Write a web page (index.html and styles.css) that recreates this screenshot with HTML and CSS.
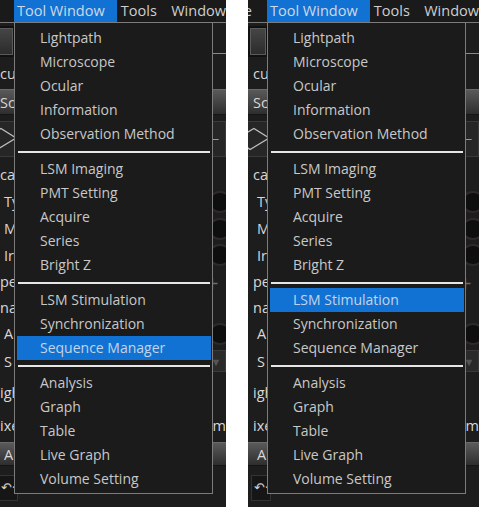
FILE: index.html
```html
<!DOCTYPE html>
<html>
<head>
<meta charset="utf-8">
<link rel="stylesheet" href="styles.css">
</head>
<body>
<div class="page">
  <div class="shot shot-a">
    <div class="scene">
      <div class="menubar">
        <div class="mb-item mb-lead"><span>Device</span></div>
        <div class="mb-item mb-tool active">Tool Window</div>
        <div class="mb-item mb-tools">Tools</div>
        <div class="mb-item mb-win">Window</div>
      </div>
      <div class="bg">
        <div class="row r1"><span class="btnbox"></span><span class="rline"></span></div>
        <div class="row r2"><span class="frag">cul</span></div>
        <div class="row r3 bar"><span class="frag">Sc</span></div>
        <div class="row r4"><span class="iconbox"><svg width="40" height="30" viewBox="0 0 40 30"><path d="M2 16 L22 4 L38 14 L18 26 Z" fill="none" stroke="#bdbdbd" stroke-width="1.4"/></svg></span><span class="minusbox">—</span></div>
        <div class="row r5"><span class="frag">car</span></div>
        <div class="row r6"><span class="frag f-in">Ty</span><span class="knob"></span></div>
        <div class="row r7"><span class="frag f-in">M</span><span class="knob"></span></div>
        <div class="row r8"><span class="frag f-in">Ir</span><span class="knob"></span></div>
        <div class="row r9"><span class="frag">pee</span><span class="plus">+</span></div>
        <div class="row r10"><span class="frag">nag</span></div>
        <div class="row r11"><span class="frag f-in">A</span><span class="knob"></span></div>
        <div class="row r12"><span class="frag f-in">S</span><span class="ddbox">▼</span></div>
        <div class="row r13"><span class="frag">igh</span></div>
        <div class="row r14"><span class="frag">ixe</span><span class="frag">am</span></div>
        <div class="row r15 bar"><span class="frag f-in">A</span></div>
        <div class="row r16"><span class="undo">↶·</span></div>
      </div>
      <div class="dropdown">
        <div class="dd-item">Lightpath</div>
        <div class="dd-item">Microscope</div>
        <div class="dd-item">Ocular</div>
        <div class="dd-item">Information</div>
        <div class="dd-item">Observation Method</div>
        <div class="dd-sep"></div>
        <div class="dd-item">LSM Imaging</div>
        <div class="dd-item">PMT Setting</div>
        <div class="dd-item">Acquire</div>
        <div class="dd-item">Series</div>
        <div class="dd-item">Bright Z</div>
        <div class="dd-sep"></div>
        <div class="dd-item">LSM Stimulation</div>
        <div class="dd-item">Synchronization</div>
        <div class="dd-item selected">Sequence Manager</div>
        <div class="dd-sep"></div>
        <div class="dd-item">Analysis</div>
        <div class="dd-item">Graph</div>
        <div class="dd-item">Table</div>
        <div class="dd-item">Live Graph</div>
        <div class="dd-item">Volume Setting</div>
      </div>
    </div>
  </div>
  <div class="shot shot-b">
    <div class="scene">
      <div class="menubar">
        <div class="mb-item mb-lead"><span>Device</span></div>
        <div class="mb-item mb-tool active">Tool Window</div>
        <div class="mb-item mb-tools">Tools</div>
        <div class="mb-item mb-win">Window</div>
      </div>
      <div class="bg">
        <div class="row r1"><span class="btnbox"></span><span class="rline"></span></div>
        <div class="row r2"><span class="frag">cul</span></div>
        <div class="row r3 bar"><span class="frag">Sc</span></div>
        <div class="row r4"><span class="iconbox"><svg width="40" height="30" viewBox="0 0 40 30"><path d="M2 16 L22 4 L38 14 L18 26 Z" fill="none" stroke="#bdbdbd" stroke-width="1.4"/></svg></span><span class="minusbox">—</span></div>
        <div class="row r5"><span class="frag">car</span></div>
        <div class="row r6"><span class="frag f-in">Ty</span><span class="knob"></span></div>
        <div class="row r7"><span class="frag f-in">M</span><span class="knob"></span></div>
        <div class="row r8"><span class="frag f-in">Ir</span><span class="knob"></span></div>
        <div class="row r9"><span class="frag">pee</span><span class="plus">+</span></div>
        <div class="row r10"><span class="frag">nag</span></div>
        <div class="row r11"><span class="frag f-in">A</span><span class="knob"></span></div>
        <div class="row r12"><span class="frag f-in">S</span><span class="ddbox">▼</span></div>
        <div class="row r13"><span class="frag">igh</span></div>
        <div class="row r14"><span class="frag">ixe</span><span class="frag">am</span></div>
        <div class="row r15 bar"><span class="frag f-in">A</span></div>
        <div class="row r16"><span class="undo">↶·</span></div>
      </div>
      <div class="dropdown">
        <div class="dd-item">Lightpath</div>
        <div class="dd-item">Microscope</div>
        <div class="dd-item">Ocular</div>
        <div class="dd-item">Information</div>
        <div class="dd-item">Observation Method</div>
        <div class="dd-sep"></div>
        <div class="dd-item">LSM Imaging</div>
        <div class="dd-item">PMT Setting</div>
        <div class="dd-item">Acquire</div>
        <div class="dd-item">Series</div>
        <div class="dd-item">Bright Z</div>
        <div class="dd-sep"></div>
        <div class="dd-item selected">LSM Stimulation</div>
        <div class="dd-item">Synchronization</div>
        <div class="dd-item">Sequence Manager</div>
        <div class="dd-sep"></div>
        <div class="dd-item">Analysis</div>
        <div class="dd-item">Graph</div>
        <div class="dd-item">Table</div>
        <div class="dd-item">Live Graph</div>
        <div class="dd-item">Volume Setting</div>
      </div>
    </div>
  </div>
</div>
</body>
</html>
```

FILE: styles.css
```css
* { box-sizing: border-box; }
html, body { margin: 0; padding: 0; background: #ffffff; }
body { font-family: "Open Sans", "Noto Sans", sans-serif; font-size: 14px; }

.page { display: flex; gap: 22px; width: 479px; height: 507px; }

.shot { height: 507px; overflow: hidden; background: #1d1d1d; }
.shot-a { width: 226px; }
.shot-b { width: 231px; }
.shot-a .scene { margin-left: -5px; }

.scene { position: relative; width: 231px; height: 507px; }

/* menu bar */
.menubar { display: flex; height: 23px; background: #1a1a1a; border-bottom: 1px solid #7a7a7a; color: #cfcfcf; font-size: 14.5px; line-height: 22px; white-space: nowrap; }
.mb-item { height: 22px; }
.mb-lead { width: 19px; display: flex; justify-content: flex-end; padding-right: 15px; }
.mb-tool { width: 104px; padding-left: 3px; }
.mb-tools { width: 55px; padding-left: 4px; }
.mb-win { padding-left: 0; }
.active { background: #1272d3; color: #cfd9e6; }

/* background app controls */
.bg { display: flex; flex-direction: column; color: #d8d8d8; }
.row { display: flex; justify-content: space-between; align-items: center; white-space: nowrap; }
.r1 { height: 36px; align-items: flex-start; padding-top: 5px; }
.r2 { height: 28px; }
.r3 { height: 30px; }
.r4 { height: 43px; }
.r5 { height: 28px; }
.r6, .r7 { height: 27px; }
.r8 { height: 26px; }
.r9 { height: 27px; }
.r10 { height: 25px; }
.r11 { height: 27px; }
.r12 { height: 28px; }
.r13 { height: 35px; }
.r14 { height: 30px; }
.r15 { height: 28px; }
.r16 { height: 39px; align-items: flex-start; padding-top: 7px; }

.frag { padding-left: 5px; font-size: 14.5px; }
.f-in { padding-left: 9px; }
.bar { margin: 2px 0; background: linear-gradient(#5a5a5a, #2e2e2e); border-top: 1px solid #6a6a6a; border-bottom: 1px solid #151515; }
.r3.bar { height: 26px; }
.r15.bar { height: 24px; }

.btnbox { margin-left: 2px; width: 16px; height: 27px; background: linear-gradient(#454545, #2c2c2c); border: 1px solid #5b5b5b; box-shadow: 0 0 0 2px #111; }
.rline { width: 16px; height: 26px; border-bottom: 1px solid #8a8a8a; border-left: 1px solid #555; }

.iconbox { margin-left: -16px; width: 40px; height: 36px; background: #262626; border: 1px solid #3a3a3a; display: flex; align-items: center; justify-content: center; }
.minusbox { width: 26px; height: 36px; background: #262626; border: 1px solid #3a3a3a; color: #9a9a9a; display: flex; align-items: center; justify-content: center; font-size: 12px; }

.knob { width: 24px; height: 22px; margin-right: -6px; border-radius: 50%; background: #0e0e0e; border: 2px solid #2f2a2a; }
.plus { width: 20px; color: #6c6c6c; font-size: 22px; line-height: 20px; }
.ddbox { width: 20px; height: 22px; margin-right: 0; background: #2a2a2a; border: 1px solid #3a3a3a; color: #555; font-size: 11px; display: flex; align-items: center; justify-content: center; }
.undo { margin-left: 3px; width: 20px; height: 26px; border: 1px solid #333; background: #161616; color: #d0d0d0; font-size: 13px; line-height: 22px; padding-left: 2px; }

/* dropdown menu */
.dropdown { position: absolute; top: 22px; left: 19px; width: 199px; background: #1b1b1b; border: 1px solid #7c7c7c; padding: 3px 1px 2px 2px; color: #c8c8c8; }
.dd-item { height: 24px; line-height: 24px; padding-left: 23px; white-space: nowrap; }
.dd-item.selected { background: #1272d3; color: #c2d4e8; }
.dd-sep { height: 11px; display: flex; align-items: center; padding: 0 1px; }
.dd-sep::before { content: ""; flex: 1; height: 2px; background: #e6e6e6; }
```
